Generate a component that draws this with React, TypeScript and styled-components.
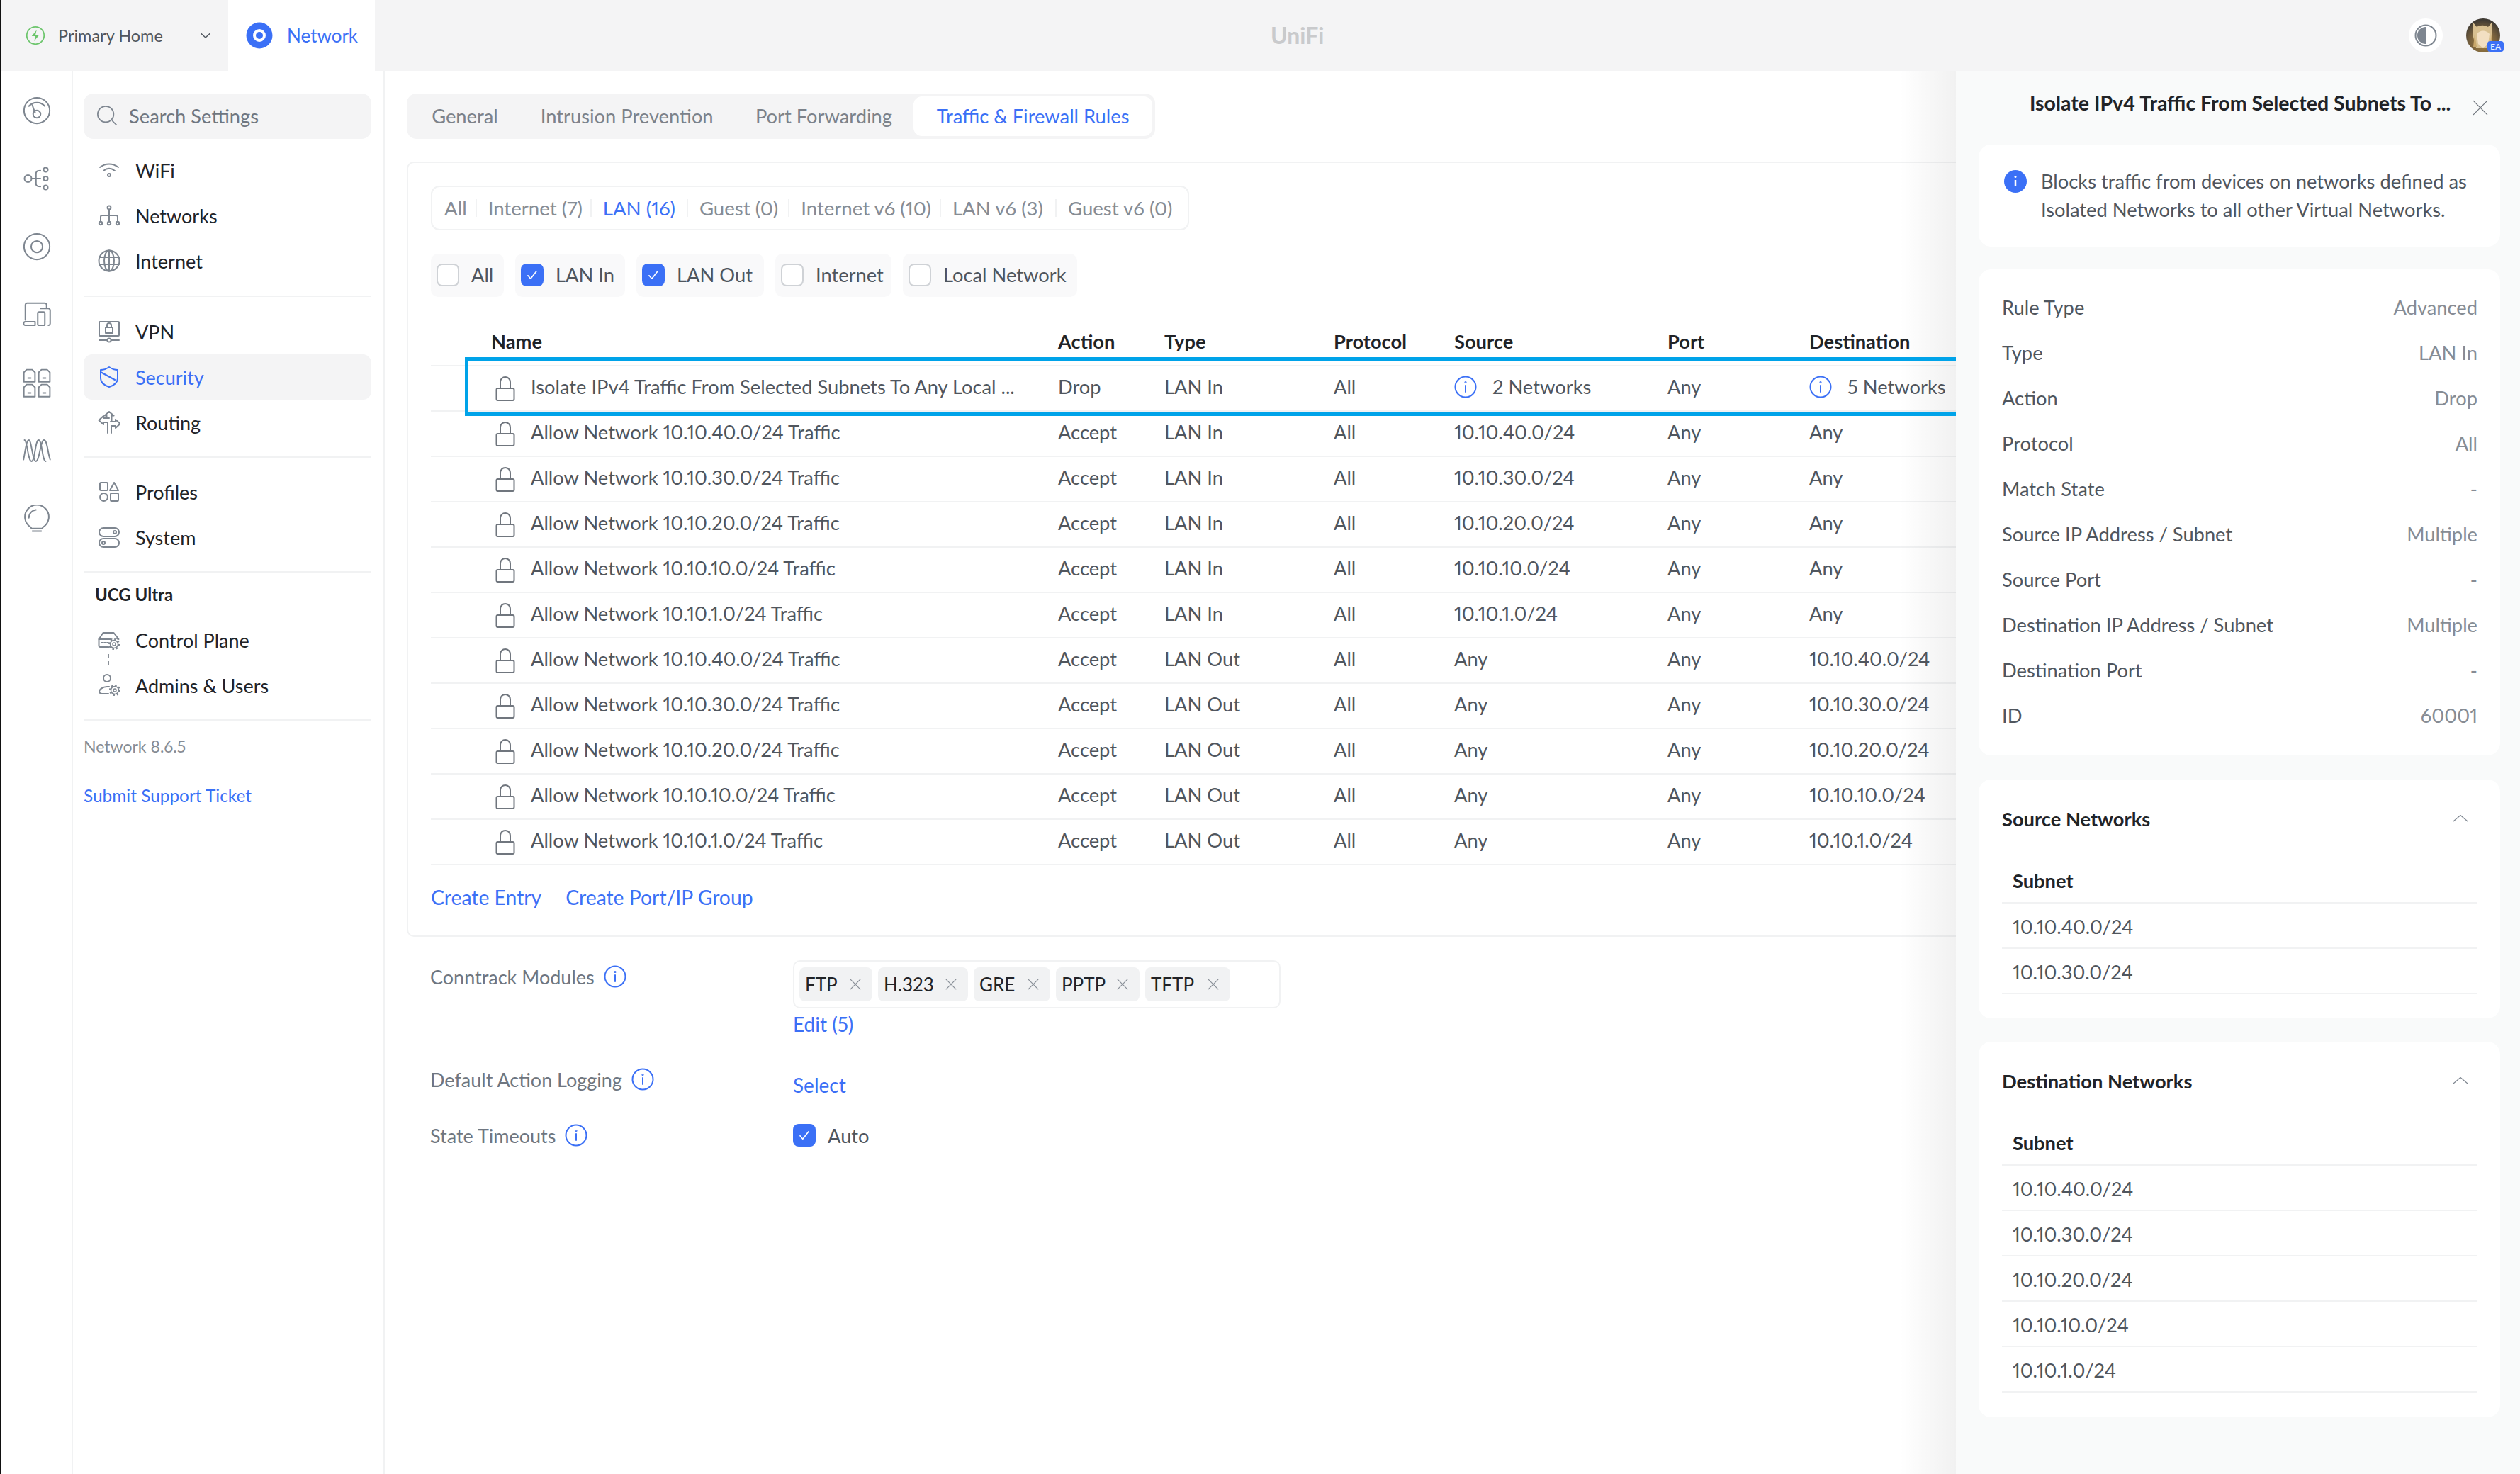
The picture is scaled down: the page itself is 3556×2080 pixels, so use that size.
import React from "react";
import styled, { createGlobalStyle } from "styled-components";

const GlobalStyle = createGlobalStyle`
  html, body {
    margin: 0;
    padding: 0;
    background: #fff;
  }
  body {
    font-family: "Lato", "Liberation Sans", sans-serif;
    font-size: 27.3px;
    font-variant-numeric: proportional-nums;
    color: #50565e;
    overflow: hidden;
  }
  * {
    box-sizing: border-box;
  }
`;

const BLUE = "#3b70f6";
const LINE = "#f1f2f3";
const ICON = "#7e8690";

const Page = styled.div`
  width: 3556px;
  height: 2080px;
  display: flex;
  flex-direction: column;
  overflow: hidden;
`;

const TopBar = styled.header`
  height: 100px;
  flex: none;
  display: flex;
  align-items: center;
  background: #f4f4f5;
  border-left: 2px solid #111;
  position: relative;
`;

const SiteSelect = styled.div`
  width: 320px;
  height: 100%;
  display: flex;
  align-items: center;
  padding-left: 34px;
  font-size: 23.5px;
  color: #50565e;
  span {
    margin-left: 18px;
    flex: 1;
  }
  svg:last-child {
    margin-right: 24px;
  }
`;

const AppTab = styled.div`
  width: 207px;
  height: 100%;
  background: #fff;
  display: flex;
  align-items: center;
  gap: 20px;
  padding-left: 25px;
  font-size: 26px;
  color: ${BLUE};
`;

const Brand = styled.div`
  position: absolute;
  left: 1791px;
  top: 30px;
  font-size: 32px;
  font-weight: 700;
  line-height: 40px;
  color: #c9cacc;
`;

const TopRight = styled.div`
  margin-left: auto;
  display: flex;
  align-items: center;
  gap: 33px;
  padding-right: 28px;
`;

const ThemeButton = styled.div`
  width: 48px;
  height: 48px;
  border-radius: 50%;
  background: #fff;
  display: flex;
  align-items: center;
  justify-content: center;
`;

const Avatar = styled.div`
  width: 48px;
  height: 48px;
  position: relative;
`;

const AvatarBadge = styled.div`
  position: absolute;
  right: -5px;
  bottom: 1px;
  width: 23px;
  height: 15px;
  border-radius: 4px;
  background: ${BLUE};
  color: #e6edff;
  font-size: 12px;
  line-height: 15px;
  text-align: center;
`;

const Body = styled.div`
  flex: 1;
  display: flex;
  min-height: 0;
  overflow: hidden;
  border-left: 2px solid #111;
`;

const Rail = styled.nav`
  width: 101px;
  flex: none;
  border-right: 2px solid ${LINE};
  display: flex;
  flex-direction: column;
  align-items: center;
  padding-top: 8px;
`;

const RailItem = styled.div`
  width: 100%;
  height: 96px;
  display: flex;
  align-items: center;
  justify-content: center;
`;

const Sidebar = styled.aside`
  width: 440px;
  flex: none;
  border-right: 2px solid ${LINE};
  padding: 32px 17px 0 15px;
`;

const SearchBox = styled.div`
  height: 64px;
  border-radius: 14px;
  background: #f4f4f5;
  display: flex;
  align-items: center;
  gap: 16px;
  padding: 0 0 2px 18px;
  color: #6f7680;
  margin-bottom: 12px;
`;

const SideRow = styled.div<{ $active?: boolean }>`
  height: 64px;
  border-radius: 12px;
  display: flex;
  align-items: center;
  padding-left: 20px;
  gap: 21px;
  font-size: 27px;
  color: ${(p) => (p.$active ? BLUE : "#212327")};
  background: ${(p) => (p.$active ? "#f4f4f5" : "transparent")};
`;

const SideDivider = styled.div<{ $gap: number }>`
  height: 2px;
  background: ${LINE};
  margin: ${(p) => p.$gap}px 0;
`;

const DeviceTitle = styled.div`
  font-size: 24px;
  font-weight: 700;
  color: #212327;
  line-height: 30px;
  padding-left: 16px;
  margin: 0 0 17px;
`;

const DeviceRows = styled.div`
  position: relative;
`;

const DashedLink = styled.div`
  position: absolute;
  left: 34px;
  top: 52px;
  width: 2px;
  height: 17px;
  background: repeating-linear-gradient(to bottom, #8a9098 0 6px, transparent 6px 10px);
`;

const VersionText = styled.div`
  font-size: 23px;
  line-height: 30px;
  color: #868c94;
  margin-top: 21px;
`;

const SupportLink = styled.div`
  font-size: 24.4px;
  line-height: 30px;
  color: ${BLUE};
  margin-top: 40px;
`;

const Main = styled.main`
  flex: 1;
  min-width: 0;
  overflow: hidden;
  padding: 32px 0 0 31px;
  background: #fff;
  position: relative;
  &::after {
    content: "";
    position: absolute;
    top: 0;
    right: 0;
    bottom: 0;
    width: 80px;
    background: linear-gradient(to right, rgba(0, 0, 0, 0), rgba(0, 0, 0, 0.055));
    pointer-events: none;
  }
`;

const TabBar = styled.div`
  display: inline-flex;
  align-items: center;
  height: 64px;
  width: 1056px;
  padding: 4px;
  border-radius: 14px;
  background: #f4f4f5;
`;

const Tab = styled.div<{ $active?: boolean; $w: number }>`
  width: ${(p) => p.$w}px;
  height: 56px;
  padding-bottom: 2px;
  border-radius: 12px;
  display: flex;
  align-items: center;
  justify-content: center;
  color: ${(p) => (p.$active ? BLUE : "#7c828a")};
  background: ${(p) => (p.$active ? "#fff" : "transparent")};
`;

const RulesCard = styled.section`
  width: 2400px;
  height: 1094px;
  margin-top: 32px;
  border: 2px solid ${LINE};
  border-radius: 10px;
  padding: 32px 0 0 32px;
`;

const FilterBar = styled.div`
  display: inline-flex;
  align-items: center;
  height: 63px;
  width: 1070px;
  border: 2px solid ${LINE};
  border-radius: 12px;
  padding-left: 17px;
  font-size: 27.6px;
`;

const FilterItem = styled.div<{ $active?: boolean; $w: number }>`
  width: ${(p) => p.$w}px;
  color: ${(p) => (p.$active ? BLUE : "#868c94")};
  position: relative;
  white-space: nowrap;
  &:not(:last-child)::after {
    content: "";
    position: absolute;
    right: 16px;
    top: 4px;
    bottom: 4px;
    width: 2px;
    background: ${LINE};
  }
`;

const ChipRow = styled.div`
  display: flex;
  gap: 16px;
  margin-top: 33px;
`;

const Chip = styled.div<{ $w: number }>`
  width: ${(p) => p.$w}px;
  height: 61px;
  padding: 0 0 2px 8px;
  border-radius: 10px;
  background: #f9f9fa;
  display: flex;
  align-items: center;
  gap: 17px;
  color: #50565e;
`;

const CheckBox = styled.div<{ $on?: boolean }>`
  width: 32px;
  height: 32px;
  flex: none;
  border-radius: 8px;
  border: 2px solid ${(p) => (p.$on ? BLUE : "#cfd2d6")};
  background: ${(p) => (p.$on ? BLUE : "#fff")};
  display: flex;
  align-items: center;
  justify-content: center;
`;

const TableGrid = styled.div`
  margin-top: 32px;
  width: 2200px;
`;

const columns = "85px 800px 150px 239px 170px 301px 200px 1fr";

const HeadRow = styled.div`
  display: grid;
  grid-template-columns: ${columns};
  height: 66px;
  padding-bottom: 3px;
  align-items: center;
  font-weight: 700;
  color: #212327;
  border-bottom: 2px solid ${LINE};
`;

const Row = styled.div<{ $selected?: boolean }>`
  display: grid;
  grid-template-columns: ${columns};
  height: 64px;
  padding-bottom: 5px;
  align-items: center;
  border-bottom: 2px solid ${LINE};
  position: relative;
  ${(p) =>
    p.$selected &&
    `&::after {
      content: "";
      position: absolute;
      z-index: 2;
      left: 48px;
      width: 2104px;
      top: -13px;
      bottom: -8px;
      border: 5px solid #00a3e9;
    }`}
`;

const NameCell = styled.div`
  display: flex;
  align-items: center;
  gap: 22px;
  padding-left: 6px;
  white-space: nowrap;
  svg {
    margin-top: 4px;
  }
`;

const InfoCell = styled.div`
  display: flex;
  align-items: center;
  gap: 22px;
`;

const CardLinks = styled.div`
  display: flex;
  gap: 34px;
  margin-top: 28px;
  font-size: 28.3px;
  color: ${BLUE};
  line-height: 34px;
`;

const SettingsRow = styled.div<{ $top: number }>`
  display: grid;
  grid-template-columns: 512px 1fr;
  margin-top: ${(p) => p.$top}px;
  padding-left: 33px;
`;

const SettingLabel = styled.div<{ $pad?: number }>`
  display: flex;
  align-items: center;
  gap: 13px;
  height: 32px;
  margin-top: ${(p) => p.$pad ?? 0}px;
  font-size: 27px;
  color: #6f7680;
`;

const TagBox = styled.div`
  width: 688px;
  height: 68px;
  border: 2px solid ${LINE};
  border-radius: 10px;
  display: flex;
  align-items: center;
  gap: 8px;
  padding-left: 7px;
`;

const Tag = styled.div<{ $w: number }>`
  width: ${(p) => p.$w}px;
  height: 48px;
  border-radius: 8px;
  background: #f1f2f3;
  display: flex;
  align-items: center;
  justify-content: space-between;
  padding: 0 14px 0 8px;
  font-size: 26px;
  color: #212327;
`;

const BlueText = styled.div<{ $top?: number }>`
  color: ${BLUE};
  font-size: 28px;
  line-height: 34px;
  margin-top: ${(p) => p.$top ?? 0}px;
`;

const AutoRow = styled.div`
  display: flex;
  align-items: center;
  gap: 17px;
  height: 32px;
`;

const DetailPanel = styled.aside`
  width: 796px;
  flex: none;
  background: #f9fafa;
  padding: 0 28px 0 32px;
  position: relative;
`;

const PanelHead = styled.div`
  height: 104px;
  display: flex;
  align-items: flex-start;
  font-size: 28.5px;
  font-weight: 700;
  color: #212327;
  padding: 28px 14px 0 72px;
  line-height: 34px;
  white-space: nowrap;
  svg {
    margin: 10px 0 0 auto;
  }
`;

const PanelCard = styled.section<{ $h: number; $gap?: number }>`
  height: ${(p) => p.$h}px;
  background: #fff;
  border-radius: 18px;
  margin-top: ${(p) => p.$gap ?? 0}px;
`;

const InfoNote = styled.div`
  display: flex;
  gap: 20px;
  padding: 32px 20px 0 36px;
  line-height: 40px;
  white-space: nowrap;
  svg {
    margin-top: 4px;
    flex: none;
  }
`;

const DetailList = styled.div`
  padding: 22px 32px 0 33px;
`;

const DetailRow = styled.div`
  height: 64px;
  padding-bottom: 2px;
  display: flex;
  align-items: center;
  justify-content: space-between;
  color: #868c94;
  span:first-child {
    color: #50565e;
  }
`;

const SectionHead = styled.div`
  height: 112px;
  padding: 0 44px 2px 33px;
  display: flex;
  align-items: center;
  justify-content: space-between;
  font-weight: 700;
  color: #212327;
`;

const SubnetList = styled.div`
  margin: 0 32px 0 33px;
`;

const SubnetHead = styled.div`
  height: 63px;
  padding-left: 15px;
  display: flex;
  align-items: center;
  font-weight: 700;
  color: #212327;
  border-bottom: 2px solid ${LINE};
`;

const SubnetRow = styled.div`
  height: 64px;
  padding: 2px 0 0 15px;
  display: flex;
  align-items: center;
  border-bottom: 2px solid ${LINE};
`;

const Svg = ({ size = 32, color = ICON, sw = 2, children }: { size?: number; color?: string; sw?: number; children: React.ReactNode }) => (
  <svg width={size} height={size} viewBox="0 0 32 32" fill="none" stroke={color} strokeWidth={sw} strokeLinecap="round" strokeLinejoin="round" style={{ flex: "none" }}>
    {children}
  </svg>
);

const LockIcon = () => (
  <svg width="28" height="36" viewBox="0 0 28 36" fill="none" stroke="#70767e" strokeWidth="2" style={{ flex: "none" }}>
    <path d="M7 18V9a7 7 0 0 1 14 0v9" />
    <rect x="1.5" y="18" width="25" height="17" rx="2" />
  </svg>
);

const InfoIcon = () => (
  <Svg size={32} color={BLUE} sw={2}>
    <circle cx="16" cy="16" r="14.5" />
    <path d="M16 14v9" />
    <circle cx="16" cy="9.500" r="0.6" />
  </Svg>
);

const Tick = () => (
  <Svg size={24} color="#fff" sw={2.2}>
    <path d="M8 17l5 6 11-14" />
  </Svg>
);

const Cross = ({ size = 18, color = "#8a9098", sw = 2 }: { size?: number; color?: string; sw?: number }) => (
  <Svg size={size} color={color} sw={sw}>
    <path d="M5 5l22 22M27 5L5 27" />
  </Svg>
);

const ChevronUp = () => (
  <Svg size={24} color="#7e8690" sw={1.6}>
    <path d="M3 21l13-11 13 11" />
  </Svg>
);

const railIcons: React.ReactNode[] = [
  <Svg size={40} sw={1.6} key="a">
    <circle cx="16" cy="16" r="14.5" />
    <path d="M7 11a12 12 0 0 1 18 0M11 10c1 4 2 6 3 8" />
    <circle cx="16" cy="20" r="4.2" />
  </Svg>,
  <Svg size={40} sw={1.6} key="b">
    <circle cx="6" cy="16" r="4" />
    <path d="M10 16h10M20 7c-5 0-5 2-5 4v10c0 2 0 4 5 4" />
    <circle cx="26" cy="6" r="2.4" />
    <circle cx="26" cy="16" r="2.4" />
    <circle cx="26" cy="26" r="2.4" />
  </Svg>,
  <Svg size={40} sw={1.6} key="c">
    <circle cx="16" cy="16" r="14.5" />
    <circle cx="16" cy="16" r="6.5" />
  </Svg>,
  <Svg size={40} sw={1.6} key="d">
    <path d="M3 22V5c0-1 1-2 2-2h20c1 0 2 1 2 2v3M1 26c0-2 1-2 2-2h11v4H3c-1 0-2-1-2-2z" />
    <rect x="17" y="13" width="8" height="15" rx="1.5" />
    <path d="M20 9h9c1 0 2 1 2 2v15c0 1-1 2-2 2" />
  </Svg>,
  <Svg size={42} sw={1.5} key="e">
    <path d="M2 15V5l3-3h6l3 3v10zM18 15V5l3-3h6l3 3v10zM2 31V21l3-3h6l3 3v10zM18 31V21l3-3h6l3 3v10z" />
    <path d="M6.500 11h3M22.500 11h3M6.500 27h3M22.500 27h3" />
  </Svg>,
  <Svg size={40} sw={1.5} key="f">
    <path d="M2 4c3 0 4 24 8 24s4-24 8-24 4 24 8 24" />
    <path d="M1 26C3 16 4 4 7 4s4 24 8 24 5-24 9-24 4 14 7 22" />
  </Svg>,
  <Svg size={40} sw={1.6} key="g">
    <path d="M11 30h10M9 25.500a13.500 13.500 0 1 1 14 0l-1 1.500H10z" />
    <path d="M7 15a9 9 0 0 1 8-9" />
  </Svg>,
];

const WifiIcon = () => (
  <Svg>
    <path d="M3 12c8-6 18-6 26 0M8 17c5-4 11-4 16 0" />
    <circle cx="16" cy="23" r="2" />
  </Svg>
);
const TreeIcon = () => (
  <Svg>
    <circle cx="16" cy="5" r="2.4" />
    <path d="M16 8v16M4 24v-6c0-1 1-2 2-2h20c1 0 2 1 2 2v6" />
    <circle cx="4" cy="27" r="2.2" />
    <circle cx="16" cy="27" r="2.2" />
    <circle cx="28" cy="27" r="2.2" />
  </Svg>
);
const GlobeIcon = () => (
  <Svg>
    <circle cx="16" cy="16" r="14.500" />
    <ellipse cx="16" cy="16" rx="7" ry="14.500" />
    <path d="M16 1.500v29M2 11h28M2 21h28" />
  </Svg>
);
const VpnIcon = () => (
  <Svg>
    <rect x="2" y="2" width="28" height="20" rx="1" />
    <rect x="11" y="10" width="10" height="8" />
    <path d="M13 10V7a3 3 0 0 1 6 0v3M2 28h11M19 28h11" />
    <circle cx="16" cy="28" r="2.600" />
  </Svg>
);
const ShieldIcon = () => (
  <Svg color={BLUE}>
    <path d="M4 6c5 0 9-2 12-4 3 2 7 4 12 4v12c0 6-6 10-12 12C10 28 4 24 4 18z" />
    <path d="M4 9l20 11" />
  </Svg>
);
const RouteIcon = () => (
  <Svg>
    <path d="M12.500 10V6.500h-3L16 1l6.500 5.500h-3v8" />
    <path d="M16 10H8V7l-6.500 6L8 19v-3h6v15" />
    <path d="M19 31V21h6v3l6.500-6L25 12v3h-7" />
  </Svg>
);
const ProfilesIcon = () => (
  <Svg>
    <rect x="3" y="3" width="11" height="11" rx="1.500" />
    <path d="M23 3l6 11H17z" />
    <circle cx="8.500" cy="23.500" r="5.500" />
    <rect x="18" y="18" width="11" height="11" rx="1.500" />
  </Svg>
);
const SystemIcon = () => (
  <Svg>
    <rect x="2" y="3" width="28" height="12" rx="6" />
    <rect x="2" y="18" width="28" height="12" rx="6" />
    <circle cx="24" cy="9" r="2" />
    <circle cx="8" cy="24" r="2" />
  </Svg>
);
const GearBit = ({ cx, cy }: { cx: number; cy: number }) => (
  <>
    <circle cx={cx} cy={cy} r="8" fill="#fff" stroke="none" />
    <circle cx={cx} cy={cy} r="7" strokeDasharray="2.500 3" strokeWidth="2.200" strokeLinecap="butt" />
    <circle cx={cx} cy={cy} r="5.500" strokeWidth="1.500" />
    <circle cx={cx} cy={cy} r="2" strokeWidth="1.500" />
  </>
);
const ControlIcon = () => (
  <Svg>
    <path d="M16 26H3.500a2 2 0 0 1-2-2V15l6-9h15l7 9" />
    <path d="M1.500 15H28M5 20h2M9 20h2M13 20h3" />
    <GearBit cx={23} cy={22} />
  </Svg>
);
const AdminIcon = () => (
  <Svg>
    <circle cx="13" cy="6" r="5" />
    <path d="M15 28H8c-3 0-6-1-6-3 0-3 5-7 11-7h3" />
    <GearBit cx={24} cy={23} />
  </Svg>
);

const sideGroups: { label: string; icon: React.ReactNode; active?: boolean }[][] = [
  [
    { label: "WiFi", icon: <WifiIcon /> },
    { label: "Networks", icon: <TreeIcon /> },
    { label: "Internet", icon: <GlobeIcon /> },
  ],
  [
    { label: "VPN", icon: <VpnIcon /> },
    { label: "Security", icon: <ShieldIcon />, active: true },
    { label: "Routing", icon: <RouteIcon /> },
  ],
  [
    { label: "Profiles", icon: <ProfilesIcon /> },
    { label: "System", icon: <SystemIcon /> },
  ],
];

const groupGaps = [17, 16, 16];

const filters = [
  { label: "All", w: 62 },
  { label: "Internet (7)", w: 163 },
  { label: "LAN (16)", w: 137 },
  { label: "Guest (0)", w: 144 },
  { label: "Internet v6 (10)", w: 215 },
  { label: "LAN v6 (3)", w: 164 },
  { label: "Guest v6 (0)", w: 170 },
];

const chips = [
  { label: "All", w: 103 },
  { label: "LAN In", w: 155, on: true },
  { label: "LAN Out", w: 180, on: true },
  { label: "Internet", w: 164 },
  { label: "Local Network", w: 246 },
];

const subnets = ["10.10.40", "10.10.30", "10.10.20", "10.10.10", "10.10.1"];

const rules = [
  ...subnets.map((s) => ({ s, action: "Accept", type: "LAN In", src: `${s}.0/24`, dst: "Any" })),
  ...subnets.map((s) => ({ s, action: "Accept", type: "LAN Out", src: "Any", dst: `${s}.0/24` })),
];

const tags = [
  { label: "FTP", w: 103 },
  { label: "H.323", w: 127 },
  { label: "GRE", w: 108 },
  { label: "PPTP", w: 118 },
  { label: "TFTP", w: 120 },
];

const details = [
  ["Rule Type", "Advanced"],
  ["Type", "LAN In"],
  ["Action", "Drop"],
  ["Protocol", "All"],
  ["Match State", "-"],
  ["Source IP Address / Subnet", "Multiple"],
  ["Source Port", "-"],
  ["Destination IP Address / Subnet", "Multiple"],
  ["Destination Port", "-"],
  ["ID", "60001"],
];

const SubnetCard = ({ title, items, h, gap }: { title: string; items: string[]; h: number; gap: number }) => (
  <PanelCard $h={h} $gap={gap}>
    <SectionHead>
      {title}
      <ChevronUp />
    </SectionHead>
    <SubnetList>
      <SubnetHead>Subnet</SubnetHead>
      {items.map((s) => (
        <SubnetRow key={s}>{s}.0/24</SubnetRow>
      ))}
    </SubnetList>
  </PanelCard>
);

const App = () => {
  return (
    <Page>
      <GlobalStyle />
      <TopBar>
        <SiteSelect>
          <Svg size={28} color="#6cc56c" sw={2}>
            <circle cx="16" cy="16" r="14" />
            <path d="M18 7l-8 10h6l-2 8 8-10h-6z" fill="#6cc56c" stroke="none" />
          </Svg>
          <span>Primary Home</span>
          <Svg size={16} color="#50565e" sw={3}>
            <path d="M4 11l12 11 12-11" />
          </Svg>
        </SiteSelect>
        <AppTab>
          <svg width="38" height="38" viewBox="0 0 38 38" style={{ flex: "none" }}>
            <circle cx="19" cy="19" r="18.500" fill={BLUE} />
            <circle cx="19" cy="19" r="7" fill="none" stroke="#fff" strokeWidth="4" />
          </svg>
          Network
        </AppTab>
        <Brand>UniFi</Brand>
        <TopRight>
          <ThemeButton>
            <svg width="32" height="32" viewBox="0 0 32 32">
              <circle cx="16" cy="16" r="14.500" fill="none" stroke="#7e8690" strokeWidth="2" />
              <path d="M16 4a12 12 0 0 0 0 24z" fill="#7e8690" />
            </svg>
          </ThemeButton>
          <Avatar>
            <svg width="48" height="48" viewBox="0 0 48 48">
              <defs>
                <radialGradient id="av" cx="50%" cy="70%" r="65%">
                  <stop offset="0%" stopColor="#a8843f" />
                  <stop offset="60%" stopColor="#77603d" />
                  <stop offset="100%" stopColor="#3f3a33" />
                </radialGradient>
                <clipPath id="avc">
                  <circle cx="24" cy="24" r="24" />
                </clipPath>
              </defs>
              <circle cx="24" cy="24" r="24" fill="url(#av)" />
              <g clipPath="url(#avc)">
                <path d="M10 6l5 6c5-3 11-3 16 0l5-6 1 16-3 20H14L9 22z" fill="#d8c091" />
                <path d="M15 22c4-6 14-6 18 0l-2 14-7 6-7-6z" fill="#f2dfc2" />
                <path d="M12 22l3 18h-5zM36 22l-3 18h4z" fill="#c8a76b" />
              </g>
            </svg>
            <AvatarBadge>EA</AvatarBadge>
          </Avatar>
        </TopRight>
      </TopBar>

      <Body>
        <Rail>
          {railIcons.map((icon, i) => (
            <RailItem key={i}>{icon}</RailItem>
          ))}
        </Rail>

        <Sidebar>
          <SearchBox>
            <Svg size={30} sw={1.8}>
              <circle cx="14" cy="14" r="12" />
              <path d="M24 24l6 6" />
            </Svg>
            Search Settings
          </SearchBox>
          {sideGroups.map((group, i) => (
            <React.Fragment key={i}>
              {group.map((item) => (
                <SideRow key={item.label} $active={item.active}>
                  {item.icon}
                  {item.label}
                </SideRow>
              ))}
              <SideDivider $gap={groupGaps[i]} />
            </React.Fragment>
          ))}
          <DeviceTitle>UCG Ultra</DeviceTitle>
          <DeviceRows>
            <SideRow>
              <ControlIcon />
              Control Plane
            </SideRow>
            <DashedLink />
            <SideRow>
              <AdminIcon />
              Admins &amp; Users
            </SideRow>
          </DeviceRows>
          <SideDivider $gap={16} />
          <VersionText>Network 8.6.5</VersionText>
          <SupportLink>Submit Support Ticket</SupportLink>
        </Sidebar>

        <Main>
          <TabBar>
            <Tab $w={156}>General</Tab>
            <Tab $w={302}>Intrusion Prevention</Tab>
            <Tab $w={254}>Port Forwarding</Tab>
            <Tab $w={337} $active>
              Traffic &amp; Firewall Rules
            </Tab>
          </TabBar>

          <RulesCard>
            <FilterBar>
              {filters.map((f) => (
                <FilterItem key={f.label} $w={f.w} $active={f.label === "LAN (16)"}>
                  {f.label}
                </FilterItem>
              ))}
            </FilterBar>
            <ChipRow>
              {chips.map((c) => (
                <Chip key={c.label} $w={c.w}>
                  <CheckBox $on={c.on}>{c.on && <Tick />}</CheckBox>
                  {c.label}
                </Chip>
              ))}
            </ChipRow>

            <TableGrid>
              <HeadRow>
                <div />
                <div>Name</div>
                <div>Action</div>
                <div>Type</div>
                <div>Protocol</div>
                <div>Source</div>
                <div>Port</div>
                <div>Destination</div>
              </HeadRow>
              <Row $selected>
                <div />
                <NameCell>
                  <LockIcon />
                  Isolate IPv4 Traffic From Selected Subnets To Any Local ...
                </NameCell>
                <div>Drop</div>
                <div>LAN In</div>
                <div>All</div>
                <InfoCell>
                  <InfoIcon />2 Networks
                </InfoCell>
                <div>Any</div>
                <InfoCell>
                  <InfoIcon />5 Networks
                </InfoCell>
              </Row>
              {rules.map((r) => (
                <Row key={r.s + r.type}>
                  <div />
                  <NameCell>
                    <LockIcon />
                    Allow Network {r.s}.0/24 Traffic
                  </NameCell>
                  <div>{r.action}</div>
                  <div>{r.type}</div>
                  <div>All</div>
                  <div>{r.src}</div>
                  <div>Any</div>
                  <div>{r.dst}</div>
                </Row>
              ))}
            </TableGrid>
            <CardLinks>
              <div>Create Entry</div>
              <div>Create Port/IP Group</div>
            </CardLinks>
          </RulesCard>

          <SettingsRow $top={33}>
            <SettingLabel $pad={7}>
              Conntrack Modules <InfoIcon />
            </SettingLabel>
            <div>
              <TagBox>
                {tags.map((t) => (
                  <Tag key={t.label} $w={t.w}>
                    {t.label}
                    <Cross size={20} sw={2} />
                  </Tag>
                ))}
              </TagBox>
              <BlueText $top={5}>Edit (5)</BlueText>
            </div>
          </SettingsRow>
          <SettingsRow $top={45}>
            <SettingLabel>
              Default Action Logging <InfoIcon />
            </SettingLabel>
            <BlueText $top={7}>Select</BlueText>
          </SettingsRow>
          <SettingsRow $top={38}>
            <SettingLabel>
              State Timeouts <InfoIcon />
            </SettingLabel>
            <AutoRow>
              <CheckBox $on>
                <Tick />
              </CheckBox>
              Auto
            </AutoRow>
          </SettingsRow>
        </Main>

        <DetailPanel>
          <PanelHead>
            Isolate IPv4 Traffic From Selected Subnets To ...
            <Cross size={28} color="#70767e" sw={1.5} />
          </PanelHead>
          <PanelCard $h={144}>
            <InfoNote>
              <svg width="32" height="32" viewBox="0 0 32 32">
                <circle cx="16" cy="16" r="16" fill={BLUE} />
                <path d="M16 14v9" stroke="#fff" strokeWidth="2.500" />
                <circle cx="16" cy="9.500" r="1.500" fill="#fff" />
              </svg>
              <div>
                Blocks traffic from devices on networks defined as
                <br />
                Isolated Networks to all other Virtual Networks.
              </div>
            </InfoNote>
          </PanelCard>
          <PanelCard $h={686} $gap={32}>
            <DetailList>
              {details.map(([k, v]) => (
                <DetailRow key={k}>
                  <span>{k}</span>
                  <span>{v}</span>
                </DetailRow>
              ))}
            </DetailList>
          </PanelCard>
          <SubnetCard title="Source Networks" items={subnets.slice(0, 2)} h={337} gap={34} />
          <SubnetCard title="Destination Networks" items={subnets} h={530} gap={33} />
        </DetailPanel>
      </Body>
    </Page>
  );
};

export default App;
